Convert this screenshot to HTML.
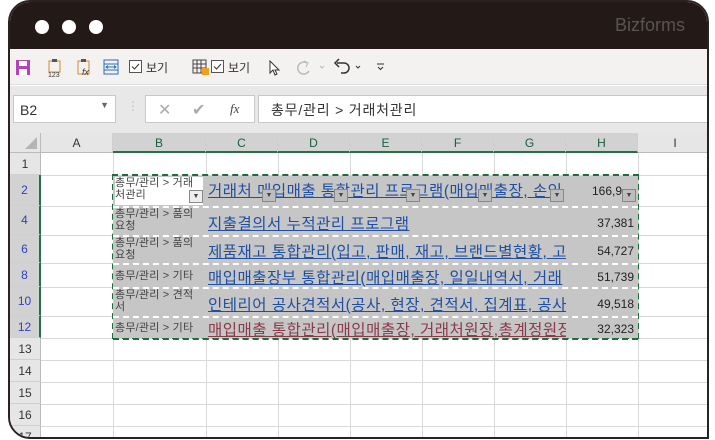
<!DOCTYPE html>
<html><head><meta charset="utf-8"><style>
*{margin:0;padding:0;box-sizing:border-box}
body{width:715px;height:440px;background:#fff;position:relative;overflow:hidden;font-family:"Liberation Sans","Noto Sans CJK KR",sans-serif}
.win{position:absolute;left:8px;top:0;width:701px;height:439px;border:2px solid #2a2220;border-radius:22px 22px 0 22px;overflow:hidden;background:#fff}
.title{position:absolute;left:0;top:0;width:100%;height:47px;background:#231a18}
.dot{position:absolute;top:18px;width:14px;height:14px;border-radius:50%;background:#fff}
.brand{position:absolute;right:22px;top:13px;color:#5b5351;font-size:18px}
.tb{position:absolute;left:0;top:47px;width:100%;height:36px;background:#f3f2f1;border-bottom:1px solid #dcdcdc}
.tb .i{position:absolute;top:10px;font-size:12px;color:#333}
.fb{position:absolute;left:0;top:84px;width:100%;height:47px;background:#e8e8e8}
.box{position:absolute;background:#fff;border:1px solid #c8c8c8}
.grid{position:absolute;left:0;top:131px;width:100%;height:310px}
.ch{position:absolute;top:0;height:20px;background:#e6e6e6;border-right:1px solid #cfcfcf;border-bottom:1px solid #bbb;font-size:12px;color:#333;text-align:center;line-height:20px}
.ch.s{background:#d2d2d2;border-bottom:2px solid #217346;color:#1b5e3a}
.rh{position:absolute;left:0;width:31px;background:#e6e6e6;border-bottom:1px solid #cfcfcf;border-right:1px solid #bbb;font-size:12px;color:#333;text-align:center}
.rh.s{background:#d2d2d2;color:#2f3fbf;border-right:2px solid #217346}
.vl{position:absolute;top:20px;bottom:0;width:1px;background:#d8d8d8}
.hl{position:absolute;left:31px;right:0;height:1px;background:#d8d8d8}
.row{position:absolute;left:103px;width:525px;background:#c6c6c6;border-top:2px dashed #fff}
.b{position:absolute;left:2px;top:0;width:88px;font-size:11px;line-height:12px;color:#444;overflow:hidden;white-space:nowrap;letter-spacing:.2px}
.c{position:absolute;left:95px;white-space:nowrap;font-size:15.5px;letter-spacing:0.5px;color:#1f4fa3;text-decoration:underline;overflow:hidden;width:358px}
.h{position:absolute;right:4px;font-size:12px;color:#222}
.dd{position:absolute;width:14px;height:13px;background:#bdbdbd;border:1px solid #888;font-size:7px;color:#444;text-align:center;line-height:12px}
</style></head><body>
<div class="win">
<div class="title">
<div class="dot" style="left:25px"></div><div class="dot" style="left:52px"></div><div class="dot" style="left:79px"></div>
<div class="brand">Bizforms</div>
</div>
<div class="tb">
<svg style="position:absolute;left:5px;top:10px" width="16" height="17"><rect x="1" y="1" width="14" height="15" fill="#b145b8"/><rect x="4" y="2" width="8" height="5" fill="#fff"/><rect x="4" y="10" width="8" height="6" fill="#fff"/></svg>
<svg style="position:absolute;left:37px;top:9px" width="16" height="20"><rect x="2" y="3" width="11" height="11" fill="none" stroke="#d08a2a"/><rect x="5" y="1" width="5" height="3" fill="#555"/><text x="1" y="19" font-size="7" fill="#333">123</text></svg>
<svg style="position:absolute;left:66px;top:9px" width="16" height="20"><rect x="2" y="3" width="11" height="13" fill="none" stroke="#d08a2a"/><rect x="5" y="1" width="5" height="3" fill="#555"/><text x="6" y="17" font-size="9" font-style="italic" fill="#333">fx</text></svg>
<svg style="position:absolute;left:93px;top:10px" width="16" height="16"><rect x="1" y="1" width="14" height="14" fill="none" stroke="#2a6fb6"/><line x1="1" y1="5" x2="15" y2="5" stroke="#2a6fb6"/><line x1="1" y1="11" x2="15" y2="11" stroke="#2a6fb6"/><path d="M3 8h10M5 6.5L3 8l2 1.5M11 6.5l2 1.5-2 1.5" stroke="#2a6fb6" fill="none"/></svg>
<svg style="position:absolute;left:119px;top:11px" width="14" height="14"><rect x=".5" y=".5" width="12" height="12" fill="#fff" stroke="#555"/><path d="M3 6.5l2.5 2.5 4.5-5" stroke="#333" fill="none"/></svg>
<div class="i" style="left:136px">보기</div>
<svg style="position:absolute;left:182px;top:10px" width="18" height="17"><path d="M1 1h13v13H1zM1 5h13M1 9h13M5 1v13M9 1v13" stroke="#444" fill="none"/><rect x="10" y="9" width="7" height="7" fill="#f0a020"/></svg>
<svg style="position:absolute;left:201px;top:11px" width="14" height="14"><rect x=".5" y=".5" width="12" height="12" fill="#fff" stroke="#555"/><path d="M3 6.5l2.5 2.5 4.5-5" stroke="#333" fill="none"/></svg>
<div class="i" style="left:218px">보기</div>
<svg style="position:absolute;left:258px;top:11px" width="14" height="16"><path d="M2 1v12l3-3 2 5 2-1-2-4h4z" fill="#fff" stroke="#333"/></svg>
<svg style="position:absolute;left:285px;top:10px" width="34" height="16"><path d="M12 4a6 6 0 1 0 2 8" stroke="#bbb" fill="none" stroke-width="1.5"/><path d="M9 2l4 2-2 4" stroke="#bbb" fill="none"/><path d="M25 7l2 2 2-2" stroke="#bbb" fill="none"/></svg>
<svg style="position:absolute;left:323px;top:9px" width="34" height="18"><path d="M4 5h7a5 5 0 0 1 0 10h-3" stroke="#333" fill="none" stroke-width="1.5"/><path d="M6 1L2 5l4 4" stroke="#333" fill="none" stroke-width="1.5"/><path d="M23 8l2 2 2-2" stroke="#333" fill="none"/></svg>
<svg style="position:absolute;left:366px;top:13px" width="10" height="10"><path d="M1 2h7M2 5l2.5 2.5L7 5" stroke="#333" fill="none"/></svg>
</div>
<div class="fb">
<div class="box" style="left:3px;top:9px;width:103px;height:28px;font-size:14px;color:#333;padding:6px 0 0 6px">B2<span style="position:absolute;right:6px;top:4px;font-size:9px;color:#666">▼</span></div>
<div style="position:absolute;left:117px;top:13px;color:#bbb;font-size:12px">⋮</div>
<div class="box" style="left:135px;top:9px;width:110px;height:28px"><span style="position:absolute;left:12px;top:4px;color:#aaa;font-size:16px">✕</span><span style="position:absolute;left:46px;top:4px;color:#aaa;font-size:16px">✔</span><span style="position:absolute;left:84px;top:5px;color:#444;font-size:13px;font-style:italic;font-family:'Liberation Serif',serif">fx</span></div>
<div class="box" style="left:248px;top:9px;width:460px;height:28px;font-size:14px;letter-spacing:.8px;color:#333;padding:4px 0 0 12px">총무/관리 &gt; 거래처관리</div>
</div>
<div class="grid">
<div style="position:absolute;left:0;top:0;width:31px;height:20px;background:#e6e6e6;border-right:1px solid #bbb;border-bottom:1px solid #bbb"><div style="position:absolute;right:3px;bottom:3px;width:0;height:0;border-left:12px solid transparent;border-bottom:12px solid #b5b5b5"></div></div>
<div class="ch" style="left:31px;width:72px">A</div>
<div class="ch s" style="left:103px;width:93px">B</div>
<div class="ch s" style="left:196px;width:72px">C</div>
<div class="ch s" style="left:268px;width:72px">D</div>
<div class="ch s" style="left:340px;width:72px">E</div>
<div class="ch s" style="left:412px;width:72px">F</div>
<div class="ch s" style="left:484px;width:72px">G</div>
<div class="ch s" style="left:556px;width:72px">H</div>
<div class="ch" style="left:628px;width:75px">I</div>
<div class="vl" style="left:103px"></div><div class="vl" style="left:196px"></div><div class="vl" style="left:268px"></div><div class="vl" style="left:340px"></div><div class="vl" style="left:412px"></div><div class="vl" style="left:484px"></div><div class="vl" style="left:556px"></div><div class="vl" style="left:628px"></div>
<div class="hl" style="top:42px"></div><div class="hl" style="top:73px"></div><div class="hl" style="top:102px"></div><div class="hl" style="top:130px"></div><div class="hl" style="top:154px"></div><div class="hl" style="top:183px"></div><div class="hl" style="top:205px"></div><div class="hl" style="top:227px"></div><div class="hl" style="top:249px"></div><div class="hl" style="top:271px"></div><div class="hl" style="top:293px"></div>
<div class="rh" style="top:20px;height:22px;line-height:22px">1</div>
<div class="rh s" style="top:42px;height:31px;line-height:31px">2</div>
<div class="rh s" style="top:73px;height:29px;line-height:29px">4</div>
<div class="rh s" style="top:102px;height:28px;line-height:28px">6</div>
<div class="rh s" style="top:130px;height:24px;line-height:24px">8</div>
<div class="rh s" style="top:154px;height:29px;line-height:29px">10</div>
<div class="rh s" style="top:183px;height:22px;line-height:22px">12</div>
<div class="rh" style="top:205px;height:22px;line-height:22px">13</div>
<div class="rh" style="top:227px;height:22px;line-height:22px">14</div>
<div class="rh" style="top:249px;height:22px;line-height:22px">15</div>
<div class="rh" style="top:271px;height:22px;line-height:22px">16</div>
<div class="rh" style="top:293px;height:22px;line-height:22px">17</div>

<div style="position:absolute;left:102px;top:41px;width:527px;height:165px;border:2px dashed #1e6b3c"></div>
<div class="row" style="top:43px;height:30px;border-top:0"><div class="b" style="top:1px;background:#fff;height:28px">총무/관리 &gt; 거래<br>처관리</div><div class="dd" style="left:76px;top:14px;background:#eee">▼</div><div class="c" style="top:3px">거래처 매입매출 통합관리 프로그램(매입매출장, 손익</div><div class="h" style="top:8px;right:16px">166,9</div>
<div class="dd" style="left:149px;top:13px">▼</div><div class="dd" style="left:221px;top:13px">▼</div><div class="dd" style="left:293px;top:13px">▼</div><div class="dd" style="left:365px;top:13px">▼</div><div class="dd" style="left:437px;top:13px">▼</div><div class="dd" style="left:509px;top:13px">▼</div></div>
<div class="row" style="top:73px;height:29px"><div class="b">총무/관리 &gt; 품의<br>요청</div><div class="c" style="top:4px;width:250px">지출결의서 누적관리 프로그램</div><div class="h" style="top:8px">37,381</div></div>
<div class="row" style="top:102px;height:28px"><div class="b">총무/관리 &gt; 품의<br>요청</div><div class="c" style="top:3px">제품재고 통합관리(입고, 판매, 재고, 브랜드별현황, 고</div><div class="h" style="top:7px">54,727</div></div>
<div class="row" style="top:130px;height:24px"><div class="b" style="top:5px">총무/관리 &gt; 기타</div><div class="c" style="top:1px">매입매출장부 통합관리(매입매출장, 일일내역서, 거래</div><div class="h" style="top:5px">51,739</div></div>
<div class="row" style="top:154px;height:29px"><div class="b">총무/관리 &gt; 견적<br>서</div><div class="c" style="top:4px">인테리어 공사견적서(공사, 현장, 견적서, 집계표, 공사</div><div class="h" style="top:8px">49,518</div></div>
<div class="row" style="top:183px;height:22px"><div class="b" style="top:4px">총무/관리 &gt; 기타</div><div class="c" style="top:0px;color:#8a3a4a">매입매출 통합관리(매입매출장, 거래처원장,총계정원장</div><div class="h" style="top:4px">32,323</div></div>
<div style="position:absolute;left:103px;top:205px;width:525px;height:2px;border-top:2px dashed #1e6b3c"></div>
</div>
</div>
</body></html>
